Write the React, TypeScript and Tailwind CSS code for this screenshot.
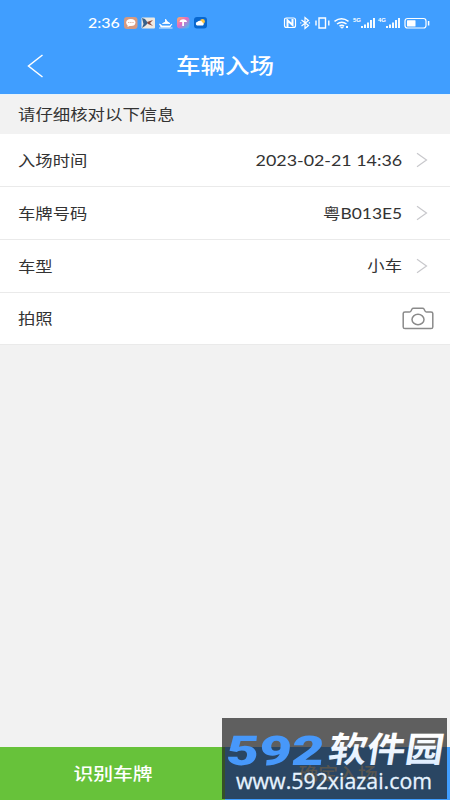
import { ReactNode } from "react";

interface RowProps {
  label: string;
  value?: string;
  valueClass?: string;
  children?: ReactNode;
}

const cjk = "font-['Noto_Sans_CJK_SC',sans-serif]";

function StatusBar() {
  return (
    <div className="flex h-[46px] items-center justify-between pl-[88px] pr-[20px] text-white">
      <div className="flex items-center">
        <span className="w-[35px] origin-left scale-x-[1.14] font-['Lato',sans-serif] text-[14px] font-medium leading-none">2:36</span>
        <svg width="86" height="14" viewBox="0 0 86 14">
          <defs>
            <linearGradient id="app" x1="0" y1="0" x2="1" y2="1">
              <stop offset="0" stopColor="#ffb35c" />
              <stop offset="0.45" stopColor="#e36bc4" />
              <stop offset="1" stopColor="#2fc6f5" />
            </linearGradient>
          </defs>
          <rect x="1" y="1" width="13.5" height="12" rx="3" fill="#d79a80" />
          <ellipse cx="7.8" cy="6.5" rx="4.6" ry="3.5" fill="#fff" />
          <path d="M5 8l-.5 3 3-1.5z" fill="#fff" />
          <path d="M5.3 6.5h1M7.4 6.5h1M9.5 6.5h1" stroke="#d79a80" />
          <rect x="18.5" y="1.5" width="13.5" height="11" rx="1" fill="#eee9e2" />
          <path d="M19 2l3 1 3 4-3 3-3 2 1.5-4z" fill="#38628c" />
          <path d="M24 6l6-2-3 3 3 3-5-2z" fill="#8c4b3e" />
          <path d="M36 12h13.5M36.5 8l3 2h7l2.5-2-2 3h-9zM39.5 7.5l3-1.5V3l1.5 2.5 3 2z" fill="#fff" stroke="#fff" strokeWidth=".8" />
          <rect x="54" y="1" width="12.5" height="11.5" rx="3" fill="url(#app)" />
          <path d="M56.5 6a3.8 3.2 0 0 1 7.5 0h-3v4h-1.8V6z" fill="#fff" />
          <rect x="71" y="1" width="13" height="11.5" rx="3" fill="#0867cf" />
          <circle cx="79.5" cy="5.5" r="2.4" fill="#ffc440" />
          <path d="M74 9.5a2 2 0 0 1 .5-3.8 3 3 0 0 1 5 .8 1.7 1.7 0 0 1 .5 3z" fill="#fff" />
        </svg>
      </div>
      <svg width="147" height="14" viewBox="0 0 147 14" fill="none" stroke="#fff" strokeWidth="1.2">
        <path d="M3.5 2h7q2 0 2 2v5.5q0 2-2 2h-7q-2 0-2-2V4q0-2 2-2z" />
        <path d="M4.5 11V4.3l5 4.7V3" strokeWidth="2" />
        <path d="M18.5 4l7 5.5-3.5 3v-11l3.5 3-7 5.5" />
        <path d="M17.3 6.9h1M25.8 6.9h1.3M33 4.5v5M36 2h6.5v10H36zM45.8 4.5v5" strokeWidth="1.4" />
        <path d="M51.5 5.3q7-5.2 14 0M54 8q4.8-3.6 9.5 0M56.5 10.2q2.3-1.8 4.6 0" strokeWidth="1.5" />
        <path d="M57.5 11L59 12.5l1.5-1.5z" fill="#fff" strokeWidth=".5" />
        <path d="M64 10v2" strokeWidth="2" />
        <g fill="#fff" stroke="none" className="font-['Liberation_Sans',sans-serif] text-[6px] font-bold">
          <text x="70" y="5.7">5G</text>
          <text x="95" y="5.7">4G</text>
        </g>
        <path d="M79 12v-2M82 12V8.5M85 12V6.5M88 12V4M91 12V2M104 12v-2M107 12V8.5M110 12V6.5M113 12V4M116 12V2" strokeWidth="1.9" />
        <rect x="122" y="2.5" width="21" height="9.5" rx="2.5" />
        <rect x="124" y="4.2" width="8.5" height="6.2" rx=".5" fill="#fff" stroke="none" />
        <path d="M145.6 5v4.5" strokeWidth="1.5" />
      </svg>
    </div>
  );
}

function Arrow() {
  return (
    <svg className="ml-[14px] mr-[12px]" width="12" height="16" viewBox="0 0 12 16" fill="none" stroke="#c8c8cc" strokeWidth="1.2">
      <path d="M1 1.3L10.5 8 1 14.7" />
    </svg>
  );
}

function CameraIcon() {
  return (
    <svg width="32" height="23" viewBox="0 0 32 23" fill="none" stroke="#8a8a8a" strokeWidth="1.5" strokeLinejoin="round">
      <path d="M3 5h4.5q1 0 1.5-1l1-2q.4-.8 1.5-.8h9q1.1 0 1.5.8l1 2q.5 1 1.5 1H29q1.8 0 1.8 1.6V20q0 1.6-1.8 1.6H3q-1.8 0-1.8-1.6V6.6Q1.2 5 3 5z" />
      <ellipse cx="16" cy="12.5" rx="6" ry="5.2" />
    </svg>
  );
}

function Row({ label, value, valueClass, children }: RowProps) {
  return (
    <div className="flex h-[53px] items-center justify-between border-b border-[#eaeaea] bg-white pl-[18px] pr-[10px] last:h-[52px]">
      <span className="origin-left scale-x-[1.155] pb-[2px]">{label}</span>
      <div className="flex items-center">
        {value && <span className={`origin-right ${valueClass}`}>{value}</span>}
        {children || <Arrow />}
      </div>
    </div>
  );
}

function Watermark() {
  return (
    <div className="absolute bottom-px right-[3px] h-[81px] w-[225px] bg-[#212121]/70">
      <svg width="225" height="81" viewBox="0 0 225 81">
        <defs>
          <linearGradient id="white" x1="0" y1="0" x2="0" y2="1">
            <stop offset="0.3" stopColor="#fff" />
            <stop offset="1" stopColor="#d5e8ff" />
          </linearGradient>
        </defs>
        <g transform="translate(3 46.5) skewX(-6)">
          <text textLength="98" lengthAdjust="spacingAndGlyphs" fill="#4798fa" className="font-['Roboto',sans-serif] text-[41px] font-black">592</text>
        </g>
        <g transform="translate(105 44) skewX(-9)">
          <text textLength="115" lengthAdjust="spacingAndGlyphs" fill="url(#white)" className="font-['Noto_Sans_CJK_SC',sans-serif] text-[35px] font-bold">软件园</text>
        </g>
        <text x="14" y="71" textLength="196" lengthAdjust="spacingAndGlyphs" fill="#e6f3ff" stroke="#e6f3ff" strokeWidth=".3" className="font-['Open_Sans',sans-serif] text-[21px]">www.592xiazai.com</text>
      </svg>
    </div>
  );
}

export default function App() {
  return (
    <div className={`relative flex h-[800px] w-[450px] flex-col overflow-hidden bg-[#f2f2f2] text-[15px] leading-none text-[#333] ${cjk}`}>
      <header className="h-[94px] bg-[#409eff] text-white">
        <StatusBar />
        <div className="flex h-10 items-center">
          <svg className="ml-[27px]" width="17" height="24" viewBox="0 0 17 24" fill="none" stroke="#fff" strokeWidth="1.5">
            <path d="M15.5 1L1.5 12l14 11" />
          </svg>
          <h1 className="mr-[44px] flex-1 pb-[3px] text-center">
            <span className="inline-block scale-x-[1.165] text-[21px] font-medium leading-none">车辆入场</span>
          </h1>
        </div>
      </header>
      <div className="flex h-10 items-center border-t border-[#e8f3fa] pl-[18px]">
        <span className="origin-left scale-x-[1.16] pb-[2px]">请仔细核对以下信息</span>
      </div>
      <main>
        <Row label="入场时间" value="2023-02-21 14:36" valueClass="scale-x-[1.19] pt-px font-['Lato','Noto_Sans_CJK_SC',sans-serif]" />
        <Row label="车牌号码" value="粤B013E5" valueClass="scale-x-[1.16] pt-px font-['Lato','Noto_Sans_CJK_SC',sans-serif]" />
        <Row label="车型" value="小车" valueClass="scale-x-[1.155] pb-[3px]" />
        <Row label="拍照">
          <span className="mr-[6px]"><CameraIcon /></span>
        </Row>
      </main>
      <footer className="mt-auto flex h-[53px] text-[17px] font-medium text-white">
        <button className="flex-1 bg-[#67c23a] pb-[2px]">
          <span className="inline-block scale-x-[1.165]">识别车牌</span>
        </button>
        <button className="flex-1 bg-[#409eff] pb-[3px]">
          <span className="inline-block scale-x-[1.165] text-[#d8d0bd]">确定入场</span>
        </button>
      </footer>
      <Watermark />
    </div>
  );
}
